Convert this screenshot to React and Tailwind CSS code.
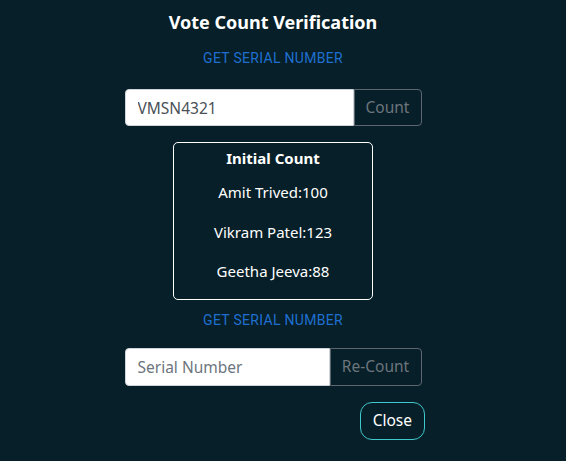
import React from 'react';

function SerialLink() {
  return (
    <button className="text-[14px] leading-[20px] tracking-[0.3px] text-[#1f6fd1] uppercase [font-family:Roboto,sans-serif]">
      Get Serial Number
    </button>
  );
}

export default function App() {
  return (
    <div className="w-[566px] h-[461px] pr-[20px] bg-[#071f28] text-white flex flex-col items-center [font-family:'Noto_Sans',sans-serif]">
      <h2 className="mt-[9px] text-[18px] leading-[26px] font-bold">Vote Count Verification</h2>
      <div className="mt-[10px]">
        <SerialLink />
      </div>

      <div className="mt-[20px] flex w-[297px]">
        <input
          defaultValue="VMSN4321"
          className="w-[229px] h-[37px] bg-white border border-[#ced4da] rounded-l-[4px] px-[12px] text-[15.5px] text-[#495057] outline-none"
        />
        <button className="flex-1 h-[37px] border border-[#5d666e] rounded-r-[4px] text-[15.5px] text-[#6c757d]">
          Count
        </button>
      </div>

      <div className="mt-[16px] w-[200px] h-[158px] border border-white rounded-[5px] flex flex-col items-center text-[15px]">
        <div className="mt-[4px] font-bold leading-[22px]">Initial Count</div>
        <div className="mt-[12px] leading-[22px]">Amit Trived:100</div>
        <div className="mt-[18px] leading-[22px]">Vikram Patel:123</div>
        <div className="mt-[17px] leading-[22px]">Geetha Jeeva:88</div>
      </div>

      <div className="mt-[7px]">
        <SerialLink />
      </div>

      <div className="mt-[17px] flex w-[297px]">
        <input
          placeholder="Serial Number"
          className="w-[205px] h-[38px] bg-white border border-[#ced4da] rounded-l-[4px] px-[12px] text-[15.5px] text-[#495057] placeholder:text-[#6c757d] outline-none"
        />
        <button className="flex-1 h-[38px] border border-[#5d666e] rounded-r-[4px] text-[15.5px] text-[#6c757d]">
          Re-Count
        </button>
      </div>

      <div className="mt-[16px] w-[304px] flex justify-end">
        <button className="h-[38px] px-[12px] border border-[#3fc9cc] rounded-[12px] text-[15.5px] text-white">
          Close
        </button>
      </div>
    </div>
  );
}
